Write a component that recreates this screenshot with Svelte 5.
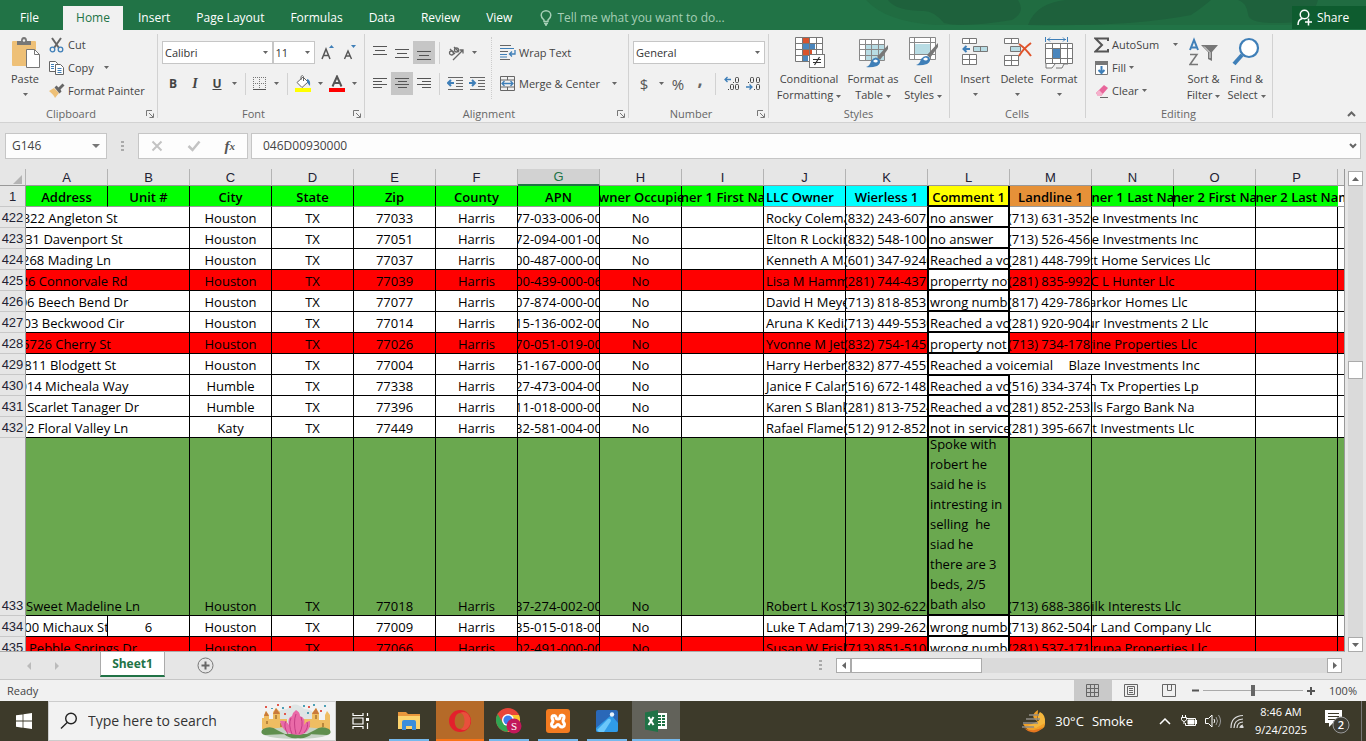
<script>
  const tabs = ['Insert', 'Page Layout', 'Formulas', 'Data', 'Review', 'View'];
  const letters = 'ABCDEFGHIJKLMNOP'.split('');
  const heads = [
    ['Address', 'lime'], ['Unit #', 'lime'], ['City', 'lime'], ['State', 'lime'], ['Zip', 'lime'],
    ['County', 'lime'], ['APN', 'lime'], ['Owner Occupied', 'lime'], ['Owner 1 First Name', 'lime'],
    ['LLC Owner', 'cyan left'], ['Wierless 1', 'cyan'], ['Comment 1', 'yellow'], ['Landline 1', 'orange'],
    ['Owner 1 Last Name', 'lime'], ['Owner 2 First Name', 'lime'], ['Owner 2 Last Name', 'lime spill']
  ];
  const rows = [
    { n: 422, a: '5322 Angleton St', c: 'Houston', z: '77033', g: '077-033-006-000', j: 'Rocky Coleman', k: '(832) 243-6073', l: 'no answer', m: '(713) 631-3529', o: 'Blaze Investments Inc' },
    { n: 423, a: '4031 Davenport St', c: 'Houston', z: '77051', g: '072-094-001-000', j: 'Elton R Lockin', k: '(832) 548-1000', l: 'no answer', m: '(713) 526-4562', o: 'Blaze Investments Inc' },
    { n: 424, a: '268 Mading Ln', c: 'Houston', z: '77037', g: '000-487-000-000', j: 'Kenneth A May', k: '(601) 347-9240', l: 'Reached a voicemail', m: '(281) 448-7999', o: 'Perfect Home Services Llc' },
    { n: 425, a: '1426 Connorvale Rd', c: 'Houston', z: '77039', g: '100-439-000-060', j: 'Lisa M Hammer', k: '(281) 744-4373', l: 'properrty not', m: '(281) 835-9922', o: 'C L Hunter Llc', t: 'red' },
    { n: 426, a: '1206 Beech Bend Dr', c: 'Houston', z: '77077', g: '107-874-000-000', j: 'David H Meyer', k: '(713) 818-8531', l: 'wrong number', m: '(817) 429-7865', o: 'Markor Homes Llc' },
    { n: 427, a: '1403 Beckwood Cir', c: 'Houston', z: '77014', g: '115-136-002-000', j: 'Aruna K Kedia', k: '(713) 449-5530', l: 'Reached a voicemail', m: '(281) 920-9043', o: 'Labour Investments 2 Llc' },
    { n: 428, a: '5726 Cherry St', c: 'Houston', z: '77026', g: '070-051-019-000', j: 'Yvonne M Jeter', k: '(832) 754-1450', l: 'property not', m: '(713) 734-1782', o: 'Marine Properties Llc', t: 'red' },
    { n: 429, a: '2811 Blodgett St', c: 'Houston', z: '77004', g: '061-167-000-000', j: 'Harry Herbert', k: '(832) 877-4557', l: 'Reached a voicemial', m: '', o: 'Blaze Investments Inc', wide: true },
    { n: 430, a: '11014 Micheala Way', c: 'Humble', z: '77338', g: '127-473-004-000', j: 'Janice F Calan', k: '(516) 672-1482', l: 'Reached a voicemail', m: '(516) 334-3747', o: 'Then Tx Properties Lp' },
    { n: 431, a: '1414 Scarlet Tanager Dr', c: 'Humble', z: '77396', g: '111-018-000-000', j: 'Karen S Blank', k: '(281) 813-7524', l: 'Reached a voicemail', m: '(281) 852-2532', o: 'Wells Fargo Bank Na' },
    { n: 432, a: '2202 Floral Valley Ln', c: 'Katy', z: '77449', g: '132-581-004-000', j: 'Rafael Flamer', k: '(512) 912-8528', l: 'not in service', m: '(281) 395-6678', o: 'First Investments Llc' },
    { n: 433, a: '1038 Sweet Madeline Ln', c: 'Houston', z: '77018', g: '137-274-002-000', j: 'Robert L Koss', k: '(713) 302-6220', l: 'Spoke with robert he said he is intresting in selling\u00a0 he siad he there are 3 beds, 2/5 bath also', m: '(713) 688-3860', o: 'Silk Interests Llc', t: 'green' },
    { n: 434, a: '00 Michaux St', b: '6', c: 'Houston', z: '77009', g: '035-015-018-000', j: 'Luke T Adams', k: '(713) 299-2620', l: 'wrong number', m: '(713) 862-5045', o: 'Harbor Land Company Llc' },
    { n: 435, a: '1010 Pebble Springs Dr', c: 'Houston', z: '77066', g: '102-491-000-000', j: 'Susan W Frish', k: '(713) 851-5100', l: 'wrong number', m: '(281) 537-1716', o: 'Construpa Properties Llc', t: 'red' }
  ];
  let formula = $state('046D00930000');
  let cellName = $state('G146');
  let zoom = $state(50);
</script>

{#snippet arrow()}<svg class="arr" width="5" height="3" viewBox="0 0 5 3"><path d="M0 0h5L2.500 3z" fill="#666" /></svg>{/snippet}
{#snippet launch()}<button class="launch" aria-label="More settings"><svg width="8" height="8" viewBox="0 0 8 8"><path d="M.5 6V.5H6M3 3l4 4M7.500 3.500v4h-4" fill="none" stroke="#777" /></svg></button>{/snippet}
{#snippet lines(xs)}<svg width="14" height="14" viewBox="0 0 14 14">{#each xs as [x, y, w]}<rect {x} {y} width={w} height="1" fill="#555" />{/each}</svg>{/snippet}

<div class="app">
  <header class="top">
    <svg class="art" width="500" height="30" viewBox="0 0 500 30" aria-hidden="true">
      <path d="M0 0h500v25H70Q20 22 0 0z" fill="#206c41" />
      <path d="M22 0h130q8 12-6 20-50 8-68 3-10-12-20-12-28 0-36-11zM162 25Q170 3 200 0h145q-12 10-20 15-60 12-163 10zM372 0h80q-5 18-20 22-50 4-50-8-2-12-10-14z" fill="#1e613c" />
    </svg>
    <button class="file">File</button>
    <button class="tab on">Home</button>
    {#each tabs as t}<button class="tab">{t}</button>{/each}
    <button class="tell">
      <svg width="12" height="16" viewBox="0 0 12 16" fill="none" stroke="#a6cfb6" stroke-width="1.500"><path d="M4 11.500V10C2.500 8.500 1.200 7.500 1.200 5.300a4.800 4.500 0 0 1 9.600 0C10.800 7.500 9.500 8.500 8 10v1.500zM4 13.500h4M5 15h2" /></svg>
      Tell me what you want to do...
    </button>
    <button class="share">
      <svg width="16" height="17" viewBox="0 0 16 17" fill="none" stroke="#fff" stroke-width="1.500"><circle cx="7.500" cy="5.500" r="4.300" /><path d="M1 16c0-4 2-6 4.500-6.500M8 13h7M11.500 9.500v7" /></svg>
      Share
    </button>
  </header>

  <div class="ribbon">
    <section class="group clip">
      <div class="body">
        <button class="big paste">
          <svg width="30" height="32" viewBox="0 0 30 32"><rect x="2" y="4" width="24" height="25" rx="1" fill="#eec077" /><path d="M7 8V4h4q0-4 3-4t3 4h4v4z" fill="#777" /><circle cx="14" cy="3.500" r="1.200" fill="#f1f1f1" /><path d="M16.500 12.500h8l5 5v13h-13z" fill="#fff" stroke="#777" /><path d="M24.500 12.500v5h5" fill="none" stroke="#777" /></svg>
          <span>Paste</span>{@render arrow()}
        </button>
        <div class="stack">
          <button><svg width="16" height="16" viewBox="0 0 16 16"><path d="M3 1l7 10M12 1L5 11" stroke="#666" stroke-width="2" /><g fill="none" stroke="#3f7fb8" stroke-width="1.300"><circle cx="3.500" cy="12.500" r="2.300" /><circle cx="11.500" cy="12.500" r="2.300" /></g></svg>Cut</button>
          <button><svg width="16" height="16" viewBox="0 0 16 16" fill="#fff" stroke="#666"><path d="M.5 1.500h6l2 2v8h-8z" /><path d="M6.500 4.500h5l3 3v7h-8z" /><path d="M2 4.500h3M2 6.500h3M2 8.500h3M8.500 8.500h4M8.500 10.500h4M8.500 12.500h4" stroke="#3f7fb8" /></svg>Copy<i class="sp"></i>{@render arrow()}</button>
          <button><svg width="16" height="16" viewBox="0 0 16 16"><path d="M0 8l5-3 5 5-4 5q-1-3-6-7z" fill="#eec077" /><path d="M5.500 4.500l2-2 2 2 4-4 2 2-4 4 1 2-2 2z" fill="#666" /></svg>Format Painter</button>
        </div>
      </div>
      <footer>Clipboard</footer>{@render launch()}
    </section>

    <section class="group font">
      <div class="row">
        <label class="sel w-face"><select aria-label="Font"><option>Calibri</option></select>{@render arrow()}</label>
        <label class="sel w-size"><select aria-label="Font size"><option>11</option></select>{@render arrow()}</label>
        <button class="c22 l4" aria-label="Increase font size"><svg width="14" height="15" viewBox="0 0 14 15"><path d="M1 14L5 4l4 10M2.500 10.500h5" fill="none" stroke="#555" stroke-width="1.500" /><path d="M8 3h5l-2.500-3z" fill="#3f7fb8" /></svg></button>
        <button class="c22" aria-label="Decrease font size"><svg width="14" height="15" viewBox="0 0 14 15"><path d="M1.500 14L5 6l3.500 8M3 11h4" fill="none" stroke="#555" stroke-width="1.400" /><path d="M8 0h5l-2.500 3z" fill="#3f7fb8" /></svg></button>
      </div>
      <div class="row">
        <button class="c22"><b>B</b></button>
        <button class="c22"><b class="it">I</b></button>
        <button class="c22"><b class="un">U</b></button>
        <button class="c12" aria-label="Underline styles">{@render arrow()}</button><i class="bar"></i>
        <button class="c22" aria-label="Borders"><svg width="13" height="13" viewBox="0 0 13 13"><path d="M.5 0v12M6.500 0v12M12.500 0v12M0 .5h13M0 6.500h13" stroke="#777" stroke-dasharray="1 1" /><path d="M0 12.500h13" stroke="#555" /></svg></button>
        <button class="c12" aria-label="Border styles">{@render arrow()}</button><i class="bar"></i>
        <button class="c22 l4" aria-label="Fill color"><svg width="17" height="17" viewBox="0 0 17 17"><path d="M2 7.500L8 2l5 5-6 5.500zM6 5V1.500q1.500-2 2.500 0V6" fill="#fff" stroke="#666" /><path d="M12 4q4 1 3 7-2-2-3-4z" fill="#3f7fb8" /><rect y="13" width="16" height="4" fill="#ff0" /></svg></button>
        <button class="c12" aria-label="Fill colors">{@render arrow()}</button>
        <button class="c22" aria-label="Font color"><svg width="16" height="17" viewBox="0 0 16 17"><path d="M3.500 11.500L8 1.500l4.500 10M5 8h6" fill="none" stroke="#555" stroke-width="2" /><rect y="13" width="16" height="4" fill="red" /></svg></button>
        <button class="c12" aria-label="Font colors">{@render arrow()}</button>
      </div>
      <footer>Font</footer>{@render launch()}
    </section>

    <section class="group align">
      <div class="two">
        <div class="left-part">
          <div class="row">
            <button class="c22" aria-label="Top align">{@render lines([[0, 0, 14], [2, 4, 10], [0, 8, 14]])}</button>
            <button class="c22" aria-label="Middle align">{@render lines([[0, 3, 14], [2, 7, 10], [0, 11, 14]])}</button>
            <button class="c22 sel-on" aria-label="Bottom align">{@render lines([[0, 5, 14], [2, 9, 10], [0, 13, 14]])}</button><i class="bar"></i>
            <button class="c24" aria-label="Orientation"><svg width="17" height="16" viewBox="0 0 17 16" fill="none" stroke="#666" stroke-width="1.300"><circle cx="3.500" cy="8" r="2" /><path d="M2 4l5 5M6 2l5 5" /><circle cx="8.500" cy="5" r="2" /><path d="M5 15L15 5M11.500 5H15v3.500" /></svg></button>
            <button class="c12" aria-label="Orientation options">{@render arrow()}</button>
          </div>
          <div class="row">
            <button class="c22" aria-label="Align left">{@render lines([[0, 1, 14], [0, 4, 9], [0, 7, 14], [0, 10, 9]])}</button>
            <button class="c22 sel-on" aria-label="Center">{@render lines([[0, 1, 14], [3, 4, 9], [0, 7, 14], [3, 10, 9]])}</button>
            <button class="c22" aria-label="Align right">{@render lines([[0, 1, 14], [5, 4, 9], [0, 7, 14], [5, 10, 9]])}</button><i class="bar"></i>
            <button class="c22" aria-label="Decrease indent"><svg width="16" height="13" viewBox="0 0 16 13"><path d="M1 .5h15M9 3.500h7M9 6.500h7M9 9.500h7M1 12.500h15" stroke="#666" /><path d="M7 6H2M4 3L1 6l3 3" fill="none" stroke="#3f7fb8" stroke-width="2" /></svg></button>
            <button class="c22" aria-label="Increase indent"><svg width="16" height="13" viewBox="0 0 16 13"><path d="M1 .5h15M9 3.500h7M9 6.500h7M9 9.500h7M1 12.500h15" stroke="#666" /><path d="M0 6h5M3 3l3 3-3 3" fill="none" stroke="#3f7fb8" stroke-width="2" /></svg></button>
          </div>
        </div>
        <div class="right-part">
          <button class="row"><svg width="16" height="15" viewBox="0 0 16 15"><path d="M0 .5h11M0 6.500h8M0 14.500h10" stroke="#666" /><path d="M0 3.500h14M0 9.500h7M0 12h7" stroke="#3f7fb8" /><path d="M15 5v4h-5M12 6.500L9.500 9l2.500 2.500" fill="none" stroke="#3f7fb8" stroke-width="1.300" /></svg>Wrap Text</button>
          <button class="row"><svg width="16" height="15" viewBox="0 0 16 15"><path d="M.5.5h14v14H.5zM0 4h15M0 11h15M7.500 1v3M7.500 11v3" fill="none" stroke="#666" /><path d="M2 7.500h11M4.500 5L2 7.500 4.500 10M10.500 5L13 7.500 10.500 10" fill="none" stroke="#3f7fb8" stroke-width="1.300" /></svg>Merge &amp; Center<i class="sp"></i>{@render arrow()}</button>
        </div>
      </div>
      <footer>Alignment</footer>{@render launch()}
    </section>

    <section class="group number">
      <div class="row"><label class="sel w-gen"><select aria-label="Number format"><option>General</option></select>{@render arrow()}</label></div>
      <div class="row">
        <button class="c22 sym">$</button><button class="c12" aria-label="Currencies">{@render arrow()}</button>
        <button class="c22 sym">%</button><button class="c22 comma">,</button><i class="bar"></i>
        <button class="c22 dec" aria-label="Increase decimal"><svg width="15" height="15" viewBox="0 0 15 15"><path d="M7 3.500H1M3.500 1L1 3.500 3.500 6" fill="none" stroke="#3f7fb8" stroke-width="1.300" /><g fill="none" stroke="#444"><rect x="11.500" y="1.500" width="3" height="5" rx="1" /><rect x="6.500" y="8.500" width="3" height="5" rx="1" /><rect x="11.500" y="8.500" width="3" height="5" rx="1" /></g><path d="M9 6h1v1H9zM4 13h1v1H4z" fill="#444" /></svg></button>
        <button class="c22 dec" aria-label="Decrease decimal"><svg width="15" height="15" viewBox="0 0 15 15"><path d="M0 11h6M3.500 8.500L6 11l-2.500 2.500" fill="none" stroke="#3f7fb8" stroke-width="1.300" /><g fill="none" stroke="#444"><rect x="4.500" y="1.500" width="3" height="5" rx="1" /><rect x="10.500" y="1.500" width="3" height="5" rx="1" /><rect x="10.500" y="8.500" width="3" height="5" rx="1" /></g><path d="M2 6h1v1H2zM8 13h1v1H8z" fill="#444" /></svg></button>
      </div>
      <footer>Number</footer>{@render launch()}
    </section>

    <section class="group styles">
      <div class="body">
        <button class="big w-cond">
          <svg width="32" height="32" viewBox="0 0 32 32"><path d="M2.500.5h27v24h-27z" fill="#fff" /><path d="M10 1h7v6h-7zM10 13h9v6h-9z" fill="#d9532c" /><path d="M10 7h12v5H10zM10 19h5v5h-5z" fill="#4a86bd" /><path d="M2.500.5h27v24h-27zM2.500 6.500h27M2.500 12.500h27M2.500 18.500h27M9.500.5v24M16.500.5v24M23.500.5v24" fill="none" stroke="#777" /><rect x="16.500" y="17.500" width="15" height="13" fill="#fff" stroke="#777" /><path d="M20 22.500h8M20 25.500h8M26.500 20l-5 8" stroke="#333" stroke-width="1.200" /></svg>
          <span>Conditional</span><span>Formatting {@render arrow()}</span>
        </button>
        <button class="big w-fmt">
          <svg width="32" height="32" viewBox="0 0 32 32"><path d="M2.500 2.500h25v21h-25z" fill="#fff" /><path d="M9 8h18v15H9z" fill="#b8dce4" /><path d="M2.500 2.500h25v21h-25zM2.500 7.500h25M2.500 12.500h25M2.500 18.500h25M8.500 2.500v21M14.500 2.500v21M21.500 2.500v21" fill="none" stroke="#888" /><path d="M31 8l-11 12 3 3 8-11z" fill="#777" /><path d="M9 30q4-1 5-6 4-6 8-2 3 4-2 7-6 2-11 1z" fill="#3f7fb8" /><path d="M16 24q3-3 5 0-2 3-5 0" fill="#fff" /></svg>
          <span>Format as</span><span>Table {@render arrow()}</span>
        </button>
        <button class="big w-cell">
          <svg width="32" height="32" viewBox="0 0 32 32"><path d="M2.500.5h26v22h-26z" fill="#fff" /><path d="M8 7h15v10H8z" fill="#b8dce4" /><path d="M2.500.5h26v22h-26zM2.500 5.500h26M2.500 17.500h26M7.500.5v22M23.500.5v22" fill="none" stroke="#888" /><path d="M31 6l-11 12 3 3 8-11z" fill="#777" /><path d="M9 28q4-1 5-6 4-5 8-2 3 4-2 7-6 2-11 1z" fill="#3f7fb8" /><path d="M16 22q3-3 5 0-2 3-5 0" fill="#fff" /></svg>
          <span>Cell</span><span>Styles {@render arrow()}</span>
        </button>
      </div>
      <footer>Styles</footer>
    </section>

    <section class="group cells">
      <div class="body">
        <button class="big w-ins">
          <svg width="30" height="32" viewBox="0 0 30 32" fill="#fff" stroke="#777"><path d="M2.500 1.500h14v5h-14zM9.500 1.500v5M2.500 17.500h14v10h-14zM2.500 22.500h14M9.500 17.500v10" /><path d="M13.500 9.500h14v5h-14zM20.500 9.500v5" fill="#b8dce4" /><path d="M10 12H4M6.500 9L3.500 12l3 3" fill="none" stroke="#3f7fb8" stroke-width="2" /></svg>
          <span>Insert</span>{@render arrow()}
        </button>
        <button class="big w-ins">
          <svg width="30" height="32" viewBox="0 0 30 32" fill="#fff" stroke="#777"><path d="M2.500 1.500h14v5h-14zM9.500 1.500v5M2.500 18.500h14v10h-14zM2.500 23.500h14M9.500 18.500v10" /><path d="M8.500 9.500h10v5h-10z" fill="#b8dce4" /><path d="M17 7q6 4 12 12M29 6Q21 12 17 19" fill="none" stroke="#e0532a" stroke-width="2" /></svg>
          <span>Delete</span>{@render arrow()}
        </button>
        <button class="big w-ins">
          <svg width="30" height="32" viewBox="0 0 30 32" fill="#fff" stroke="#777"><path d="M1.500 6.500h27v20h-27zM1.500 11.500h27M1.500 21.500h27M8.500 6.500v20M16.500 6.500v20M23.500 6.500v20M2 27v4h6l3-4M12 31h6l2-4h4" /><path d="M9 12h7v9H9z" fill="#4a86bd" stroke="none" /><path d="M1.500 0v5M23.500 0v5M3 2.500h19M6 .5L4 2.500l2 2M19 .5l2 2-2 2" fill="none" stroke="#3f7fb8" /></svg>
          <span>Format</span>{@render arrow()}
        </button>
      </div>
      <footer>Cells</footer>
    </section>

    <section class="group edit">
      <div class="body">
        <div class="stack">
          <button><svg width="15" height="16" viewBox="0 0 15 16"><path d="M14 4V1.500H1.500L8 8l-6.500 6.500H14V12" fill="none" stroke="#555" stroke-width="2" /></svg>AutoSum<i class="sp"></i>{@render arrow()}</button>
          <button><svg width="15" height="16" viewBox="0 0 15 16"><path d="M1.500 1.500h12v13h-12z" fill="#fff" stroke="#777" /><path d="M1 1h13v4H1z" fill="#777" /><path d="M7.500 6v7M4.500 10l3 3 3-3" fill="none" stroke="#3f7fb8" stroke-width="2" /></svg>Fill {@render arrow()}</button>
          <button><svg width="15" height="16" viewBox="0 0 15 16"><path d="M2 10l8-8 4 3-7 8H4z" fill="#e8659b" /><path d="M2 10l3-3 4 4-2 2H4z" fill="#f5b2cc" /><path d="M6 14.500h8" stroke="#666" /></svg>Clear {@render arrow()}</button>
        </div>
        <button class="big w-find">
          <svg width="30" height="32" viewBox="0 0 30 32"><path d="M1 13L5 3l4 10M2.500 10.500h5" fill="none" stroke="#3f7fb8" stroke-width="2" /><path d="M1 17.500h7L1 27.500h8" fill="none" stroke="#777" stroke-width="1.500" /><path d="M12 8h17l-6 7v9l-4-2v-7z" fill="#777" /><path d="M15 9.500l6 6V21" stroke="#eee" fill="none" /></svg>
          <span>Sort &amp;</span><span>Filter {@render arrow()}</span>
        </button>
        <button class="big w-find">
          <svg width="30" height="32" viewBox="0 0 30 32"><circle cx="17" cy="11" r="9" fill="#fff" stroke="#3f7fb8" stroke-width="2.200" /><path d="M10 18l-8 9" stroke="#3f7fb8" stroke-width="4" /></svg>
          <span>Find &amp;</span><span>Select {@render arrow()}</span>
        </button>
      </div>
      <footer>Editing</footer>
    </section>
    <button class="collapse" aria-label="Collapse the ribbon"><svg width="9" height="6" viewBox="0 0 9 6"><path d="M1 5l3.500-3.500L8 5" fill="none" stroke="#666" stroke-width="2" /></svg></button>
  </div>

  <div class="fbar">
    <label class="name"><input aria-label="Name box" bind:value={cellName} /><svg width="8" height="4" viewBox="0 0 8 4"><path d="M0 0h8L4 4z" fill="#777" /></svg></label>
    <span class="dots"></span>
    <div class="fx">
      <button aria-label="Cancel"><svg width="12" height="12" viewBox="0 0 12 12"><path d="M1.500 1.500l9 9M10.500 1.500l-9 9" stroke="#c3c3c3" stroke-width="2" /></svg></button>
      <button aria-label="Enter"><svg width="14" height="12" viewBox="0 0 14 12"><path d="M1.500 6l4 4 7-8.500" fill="none" stroke="#c3c3c3" stroke-width="2.500" /></svg></button>
      <button class="fn" aria-label="Insert function">f<small>x</small></button>
    </div>
    <label class="formula"><input aria-label="Formula bar" bind:value={formula} /><svg width="8" height="6" viewBox="0 0 8 6"><path d="M1 1l3 3 3-3" fill="none" stroke="#666" stroke-width="2" /></svg></label>
  </div>

  <main class="sheet">
    <div class="grid">
      <table>
        <colgroup><col class="ch" />{#each letters as l}<col class="cc" />{/each}<col /></colgroup>
        <thead>
          <tr class="letters"><th class="corner"><svg width="9" height="9" viewBox="0 0 9 9"><path d="M9 0v9H0z" fill="#b4b4b4" /></svg></th>{#each letters as l}<th class:cur={l === 'G'}>{l}</th>{/each}<th></th></tr>
          <tr class="heads"><th class="rh">1</th>{#each heads as [h, c]}<th class={c}><div class="cell"><span>{h}</span></div></th>{/each}<th class="edge"></th></tr>
        </thead>
        <tbody>
          {#each rows as r}
            <tr class={r.t ?? ''}>
              <th class="rh">{r.n}</th>
              {#if r.b}
                <td><div class="cell"><span>{r.a}</span></div></td><td><div class="cell"><span>{r.b}</span></div></td>
              {:else}
                <td colspan="2"><div class="cell"><span>{r.a}</span></div></td>
              {/if}
              {#each [r.c, 'TX', r.z, 'Harris', r.g, 'No', ''] as v}<td><div class="cell"><span>{v}</span></div></td>{/each}
              <td class="left"><div class="cell"><span>{r.j}</span></div></td>
              <td class="phone"><div class="cell"><span>{r.k}</span></div></td>
              {#if r.wide}
                <td colspan="4" class="cm wide"><div class="join"><div class="cell"><span>{r.l}</span></div><div class="cell"></div><div class="cell mid"><span>{r.o}</span></div></div></td>
              {:else}
                <td class="cm" class:first={r.n === 430}><div class="cell"><span>{r.l}</span></div></td>
                <td class="phone"><div class="cell"><span>{r.m}</span></div></td>
                <td colspan="2"><div class="cell"><span>{r.o}</span></div></td>
              {/if}
              <td></td><td class="edge"></td>
            </tr>
          {/each}
        </tbody>
      </table>
    </div>
    <div class="vscroll">
      <button aria-label="Scroll up"><svg width="7" height="4" viewBox="0 0 7 4"><path d="M0 4h7L3.500 0z" fill="#666" /></svg></button>
      <div class="track"><span class="thumb"></span></div>
      <button aria-label="Scroll down"><svg width="7" height="4" viewBox="0 0 7 4"><path d="M0 0h7L3.500 4z" fill="#666" /></svg></button>
    </div>
  </main>

  <nav class="tabsbar">
    <button class="nv" aria-label="Previous sheet"><svg width="4" height="8" viewBox="0 0 4 8"><path d="M4 0v8L0 4z" fill="#bbb" /></svg></button>
    <button class="nv" aria-label="Next sheet"><svg width="4" height="8" viewBox="0 0 4 8"><path d="M0 0v8l4-4z" fill="#bbb" /></svg></button>
    <button class="st">Sheet1</button>
    <button class="add" aria-label="New sheet"><svg width="17" height="17" viewBox="0 0 17 17"><circle cx="8.500" cy="8.500" r="7.500" fill="none" stroke="#777" /><path d="M8.500 4.500v8M4.500 8.500h8" stroke="#666" stroke-width="2" /></svg></button>
    <span class="dots push"></span>
    <div class="hscroll">
      <button aria-label="Scroll left"><svg width="4" height="7" viewBox="0 0 4 7"><path d="M4 0v7L0 3.500z" fill="#666" /></svg></button>
      <span class="hthumb"></span><span class="htrack"></span>
      <button aria-label="Scroll right"><svg width="4" height="7" viewBox="0 0 4 7"><path d="M0 0v7l4-3.500z" fill="#666" /></svg></button>
    </div>
  </nav>

  <div class="status">
    <span class="ready">Ready</span>
    <button class="vw on" aria-label="Normal view"><svg width="14" height="13" viewBox="0 0 14 13"><path d="M.5.5h12v12H.5zM4.500.5v12M8.500.5v12M.5 4.500h12M.5 8.500h12" fill="none" stroke="#666" /></svg></button>
    <button class="vw" aria-label="Page layout view"><svg width="14" height="13" viewBox="0 0 14 13"><path d="M.5.5h13v12H.5zM3.500 2.500h7v8h-7zM5 4.500h4M5 6.500h4M5 8.500h4" fill="none" stroke="#666" /></svg></button>
    <button class="vw" aria-label="Page break view"><svg width="14" height="13" viewBox="0 0 14 13"><path d="M.5.5h13v12H.5zM5.500.5v6h4v-6" fill="none" stroke="#666" /></svg></button>
    <div class="zoom">
      <button aria-label="Zoom out"><svg width="7" height="7" viewBox="0 0 7 7"><path d="M0 3.500h7" stroke="#555" stroke-width="2" /></svg></button>
      <input type="range" aria-label="Zoom" bind:value={zoom} />
      <button aria-label="Zoom in"><svg width="8" height="8" viewBox="0 0 8 8"><path d="M0 4h8M4 0v8" stroke="#555" stroke-width="2" /></svg></button>
    </div>
    <span class="pct">100%</span>
  </div>

  <div class="taskbar">
    <button class="start" aria-label="Start"><svg width="16" height="16" viewBox="0 0 16 16"><path d="M0 2.300L6.600 1.400v6.200H0zM7.400 1.300L16 0v7.600H7.400zM0 8.400h6.600v6.300L0 13.800zM7.400 8.400H16V16l-8.600-1.200z" fill="#fff" /></svg></button>
    <label class="search">
      <svg width="18" height="18" viewBox="0 0 18 18" fill="none" stroke="#222" stroke-width="1.400"><circle cx="11" cy="6.500" r="5.300" /><path d="M7.200 10.500L1 16.500" /></svg>
      <input placeholder="Type here to search" aria-label="Search" />
      <svg width="72" height="38" viewBox="0 0 72 38">
        <path d="M14 26Q12 7 27 7q8-9 17 0 14 0 12 18z" fill="#dfe5e5" />
        <path d="M2 27V16h2v-3l2-4 3 4v4h4V10l3-4 4 4v7h7v11zM44 28V17h8v-6l4-5 3 5v7h6v-5l2-4 3 4v15z" fill="#efbd62" />
        <path d="M13 12l3-6 4 6zM52 12l4-6 3 6zM4 14l2-5 3 5z" fill="#c9793b" />
        <path d="M15 13h2v4h-2zM55 13h2v4h-2zM6 19h2v3H6zM20 21h2v4h-2zM48 21h2v4h-2zM62 21h2v4h-2z" fill="#b9863c" />
        <ellipse cx="36" cy="31" rx="34" ry="6" fill="#c4d2c4" />
        <path d="M3 27q8-4 14 1l8 4-20 1q-6-2-2-6zM69 27q-8-4-14 1l-8 4 20 1q6-2 2-6zM24 32h28q-6 5-14 4-9 1-14-4z" fill="#5f8f4e" />
        <path d="M20 19q6-1 9 4-2-7 3-9 1-4 4-6 4 2 4 6 6 2 4 9 3-4 6-4 1 11-10 14-17 0-20-14z" fill="#ea6aa8" />
        <path d="M28 32q-5-8-2-13M32 32q-4-9-1-16M36 32q-3-12 0-20M39 32q5-8 2-17M44 31q5-6 3-11" fill="none" stroke="#c53f85" />
        <g fill="#e2574c"><path d="M5 4h2v2H5zM17 2h2v2h-2zM29 4h2v2h-2zM48 4h2v2h-2zM60 8h2v2h-2zM24 11h2v2h-2z" /></g>
        <g fill="#4d9fb5"><path d="M11 6h2v1h-2zM22 5h2v2h-2zM43 3h2v2h-2zM64 3h2v2h-2zM53 2h2v2h-2zM47 10h2v2h-2z" /></g>
      </svg>
    </label>
    <button class="task" aria-label="Task view"><svg width="17" height="16" viewBox="0 0 17 16" fill="none" stroke="#fff" stroke-width="1.200"><path d="M1 0v2.500h10V0M1 16v-2.500h10V16M1 5h10v6H1zM15.500 0v3M15.500 10v6" /><path d="M14 5h3v3h-3z" fill="#fff" stroke="none" /></svg></button>
    <button class="task run" aria-label="File Explorer"><svg width="22" height="18" viewBox="0 0 22 18"><path d="M0 0h8l2 2h12v15H0z" fill="#e8963c" /><path d="M0 4h22v13H0z" fill="#fcd36d" /><path d="M4 18v-8q0-2 2-2h10q2 0 2 2v8h-4v-4H8v4z" fill="#3b8edb" /></svg></button>
    <button class="task opera" aria-label="Opera"><svg width="24" height="24" viewBox="0 0 24 24"><path fill-rule="evenodd" d="M12 1a11 11 0 1 1 0 22 11 11 0 0 1 0-22zm0 3c-7 0-7 16 0 16s7-16 0-16z" fill="#e3202c" /><path fill-rule="evenodd" d="M12 4c3-2 6-1 8 1q5 7 0 14c-2 2-5 3-8 1 6 0 6-16 0-16z" fill="#e8503c" /></svg></button>
    <button class="task run" aria-label="Chrome"><svg width="26" height="26" viewBox="0 0 26 26"><circle cx="12" cy="12" r="12" fill="#e9453a" /><path d="M1.600 6A12 12 0 0 0 11 24l6-9H7z" fill="#31a552" /><path d="M23 7H12l5 8-5 9a12 12 0 0 0 11-17z" fill="#fbc62f" /><circle cx="12" cy="12" r="6" fill="#fff" /><circle cx="12" cy="12" r="4.600" fill="#3b7ded" /><circle cx="18" cy="18" r="7.500" fill="#c2185b" /><text x="18" y="22" text-anchor="middle" font-family="Liberation Serif" font-size="11" fill="#fff">S</text></svg></button>
    <button class="task run" aria-label="XAMPP"><svg width="24" height="24" viewBox="0 0 24 24"><rect width="24" height="24" rx="3" fill="#f47b20" /><path d="M8 6.500a2 2 0 0 0-2 2c0 1.500 1 2 1 3.500s-1.500 2-1.500 3.500a2.500 2.500 0 0 0 4.500 1.500q2-3 4 0a2.500 2.500 0 0 0 4.500-1.500c0-1.500-1.500-2-1.500-3.500s1-2 1-3.500a2 2 0 0 0-4-.5q0 2-2 2t-2-2a2 2 0 0 0-2-1.500z" fill="none" stroke="#fff" stroke-width="3" /></svg></button>
    <button class="task run" aria-label="Photos"><svg width="22" height="22" viewBox="0 0 22 22"><rect width="22" height="22" rx="2" fill="#2a68b8" /><path d="M0 18L13 7q2-2 4 0l5 6v7q0 2-2 2H2q-2 0-2-2z" fill="#2f9be8" /><path d="M1 20L12 9q3-1 3 2L8 22H3z" fill="#6bc7fa" /><circle cx="16" cy="4.500" r="2.200" fill="#e9f4fd" /></svg></button>
    <button class="task excel" aria-label="Excel"><svg width="22" height="22" viewBox="0 0 22 22"><path d="M11 3h11v16H11z" fill="#fff" /><path d="M13 5h3v2h-3zM17 5h3v2h-3zM13 8h3v2h-3zM17 8h3v2h-3zM13 11h3v2h-3zM17 11h3v2h-3zM13 14h3v2h-3zM17 14h3v2h-3z" fill="#1f7246" /><path d="M0 2.500L13 0v22L0 19.500z" fill="#1f7246" /><path d="M3.500 7l5 8M8.500 7l-5 8" stroke="#fff" stroke-width="2" /></svg></button>
    <div class="tray">
      <button class="weather"><svg width="26" height="24" viewBox="0 0 26 24"><path d="M17 1q-9 6-1 11l7-1q3 6-2 9-10 5-16-1l-3-4h14z" fill="#f0a028" /><path d="M19 3q6 3 5 11l-9 5q-5-2-9-2l12-5q-3-5 1-9z" fill="#f4b63c" /><path d="M3 19q10 5 19-1-5 7-12 5-4-1-7-4z" fill="#e5761f" /><path d="M8 6h10M5 10h14M2 14h15M1 18h12" stroke="#8e8c86" stroke-width="1.500" /></svg><span>30°C</span><span>Smoke</span></button>
      <button class="ti" aria-label="Hidden icons"><svg width="12" height="7" viewBox="0 0 12 7"><path d="M1 6l5-5 5 5" fill="none" stroke="#fff" stroke-width="1.500" /></svg></button>
      <button class="ti" aria-label="Battery"><svg width="16" height="12" viewBox="0 0 16 12" fill="none" stroke="#fff"><path d="M5.500 3.500h9v7H4.500V8M15.500 5v4" /><path d="M7 5h6v4H7z" fill="#fff" /><path d="M1.500 0v2M4.500 0v2M.5 2.500h5v2q-1 2-2.500 2T.5 4.500zM3 6.500V9" /></svg></button>
      <button class="ti" aria-label="Volume"><svg width="17" height="14" viewBox="0 0 17 14" fill="none" stroke="#fff"><path d="M.5 4.500h3L7 1v12L3.500 9.500h-3zM9 5q1.500 2 0 4" /><path d="M11 3q3 4 0 8M13.500 1q4 6 0 12" stroke="#999" /></svg></button>
      <button class="ti" aria-label="Network"><svg width="14" height="14" viewBox="0 0 14 14" fill="none" stroke="#ddd" stroke-width="1.200"><path d="M1 14Q1 2 13 1.500M4 14Q4 5.500 13 5M7 14q0-5.500 6-6M10 14q0-2.500 3-3" /><circle cx="12" cy="13" r="1" fill="#fff" /></svg></button>
      <div class="clock"><span>8:46 AM</span><span>9/24/2025</span></div>
      <button class="note" aria-label="Notifications"><svg width="26" height="26" viewBox="0 0 26 26"><path d="M1 2h17v13H9l-4 4v-4H1z" fill="#fff" /><path d="M4 5.500h11M4 8.500h11M4 11.500h7" stroke="#3d3a2a" /><circle cx="17" cy="17" r="8" fill="#3f3e35" stroke="#999" /><text x="17" y="21" text-anchor="middle" font-family="Open Sans" font-weight="600" font-size="11" fill="#fff">2</text></svg></button>
      <i class="desk"></i>
    </div>
  </div>
</div>

<style>
  :global(body) { margin: 0; }
  .app { height: 100vh; display: flex; flex-direction: column; overflow: hidden; font: 11px/16px "Open Sans", sans-serif; color: #444; background: #e6e6e6; }
  button { border: 0; background: none; padding: 0; margin: 0; font: inherit; color: inherit; display: flex; align-items: center; justify-content: center; white-space: nowrap; }
  input { border: 0; background: none; padding: 0; min-width: 0; font: inherit; color: inherit; outline: 0; }
  svg { flex: none; display: block; }
  .top { height: 30px; flex: none; display: flex; align-items: flex-end; background: #217346; color: #fff; font-size: 12px; position: relative; }
  .art { position: absolute; right: 0; top: 0; }
  .top button { position: relative; height: 24px; }
  .top .file { width: 63px; padding-right: 4px; box-sizing: border-box; }
  .tab { padding: 0 13px; }
  .top .tab.on { background: #f1f1f1; color: #217346; width: 60px; padding: 0; margin-right: 2px; }
  .tell { margin-left: 15px; gap: 5px; color: #a6cfb6; }
  .top .share { margin-left: auto; width: 74px; height: 23px; margin-bottom: 1px; gap: 4px; background: #0e5c2f; padding-right: 12px; box-sizing: border-box; }

  .ribbon { height: 92px; flex: none; display: flex; background: #f1f1f1; border-bottom: 1px solid #d2d2d2; position: relative; }
  .group { position: relative; box-sizing: border-box; padding: 7px 4px 0; flex: none; }
  .group::after { content: ''; position: absolute; right: 0; top: 4px; bottom: 4px; width: 1px; background: #d2d2d2; }
  .group footer { position: absolute; left: 0; right: 16px; bottom: 0; text-align: center; color: #666; }
  .launch { position: absolute; right: 4px; bottom: 4px; }
  .clip { width: 158px; } .font { width: 207px; } .align { width: 264px; } .number { width: 140px; }
  .styles { width: 181px; } .cells { width: 136px; } .edit { width: 187px; }
  .styles footer, .cells footer, .edit footer { right: 2px; }
  .body { display: flex; }
  .big { flex-direction: column; justify-content: flex-start; line-height: 16px; }
  .big > svg:first-child { margin-bottom: 2px; }
  .big > .arr { margin-top: 6px; }
  .arr { display: inline-block; vertical-align: middle; }
  .paste { width: 42px; }
  .w-cond { width: 72px; } .w-fmt { width: 56px; } .w-cell { width: 44px; } .w-ins { width: 42px; } .w-find { width: 43px; }
  .stack { display: flex; flex-direction: column; margin-top: -4px; }
  .clip .stack { margin-left: 3px; }
  .edit .stack { width: 84px; margin: -4px 4px 0 4px; }
  .stack button { height: 23px; justify-content: flex-start; gap: 3px; }
  .stack .sp { width: 4px; } .edit .sp { flex: 1; }
  .row { display: flex; align-items: center; height: 31px; }
  .sel { display: flex; align-items: center; height: 23px; box-sizing: border-box; border: 1px solid #c6c6c6; background: #fff; padding: 0 4px 0 2px; }
  .sel select { appearance: none; border: 0; background: none; padding: 0; flex: 1; min-width: 0; font: inherit; color: #333; outline: 0; }
  .w-face { width: 112px; } .w-size { width: 43px; } .w-gen { width: 132px; }
  .c22 { width: 22px; height: 23px; flex: none; } .c12 { width: 12px; height: 23px; flex: none; } .c24 { width: 24px; height: 23px; }
  .l4 { margin-left: 2px; }
  .sel-on { background: #c6c6c6; }
  .font b { font-size: 12px; } .font b.it { font: italic 700 14px "Liberation Serif", serif; } .un { text-decoration: underline; }
  .bar { width: 1px; height: 22px; flex: none; background: #d2d2d2; margin: 0 4px; }
  .sym { font-size: 15px; color: #555; } .comma { font-size: 18px; font-weight: 700; line-height: 10px; padding-bottom: 10px; color: #666; }
  .font .bar { margin: 0 2px 0 5px; }
  .two { display: flex; }
  .left-part { width: 122px; border-right: 1px dotted #ccc; }
  .right-part .row { margin-left: 8px; gap: 3px; } .right-part .sp { width: 6px; }
  .collapse { position: absolute; right: 10px; bottom: 5px; }

  .fbar { height: 46px; flex: none; display: flex; align-items: center; padding: 0 5px; font-size: 12px; }
  .name, .fx, .formula { height: 26px; box-sizing: border-box; border: 1px solid #c6c6c6; background: #fdfdfd; display: flex; align-items: center; }
  .name { width: 102px; padding: 0 6px; } .name input { flex: 1; }
  .dots { width: 3px; height: 11px; margin: 0 14px; background: repeating-linear-gradient(#aaa 0 2px, transparent 2px 4px); }
  .fx { width: 110px; justify-content: space-around; }
  .fn { font: italic 700 15px/15px "Liberation Serif", serif; color: #555; } .fn small { font-size: 11px; }
  .formula { flex: 1; margin-left: 3px; padding: 0 3px 0 11px; } .formula input { flex: 1; }

  .sheet { flex: 1; min-height: 0; display: flex; }
  .grid { flex: 1; min-width: 0; overflow: hidden; border-right: 1px solid #999; border-bottom: 1px solid #aaa; }
  table { table-layout: fixed; width: 100%; border-collapse: separate; border-spacing: 0; font: 13px/20px "Open Sans", sans-serif; color: #000; }
  .ch { width: 26px; } .cc { width: 82px; }
  th, td { padding: 0; box-sizing: border-box; }
  th { font-weight: 400; }
  .letters th { height: 17px; font: 13px/15px "Liberation Sans", sans-serif; color: #223; border-right: 1px solid #b4b4b4; border-bottom: 1px solid #999; }
  .letters th:last-child { border-right: 0; }
  .letters .cur { background: #d2d2d2; color: #217346; border-bottom: 2px solid #217346; }
  .corner svg { margin: 4px 3px 0 auto; }
  .heads th, td { height: 21px; border-right: 1px solid #000; border-bottom: 1px solid #000; overflow: hidden; }
  .heads th { font-weight: 600; border-bottom-color: #999; }
  .heads .rh, tbody .rh { font: 13px/18px "Liberation Sans", sans-serif; background: #e6e6e6; border-right: 1px solid #999; border-bottom: 1px solid #c8c8c8; padding: 2px 0 0; color: #223; vertical-align: bottom; }
  td { background: #fff; vertical-align: bottom; }
  .cell { width: 81px; height: 20px; display: flex; justify-content: center; align-items: center; white-space: nowrap; }
  .cell span { flex: none; padding-top: 2px; }
  .left .cell { justify-content: flex-start; padding-left: 2px; }
  .phone .cell { justify-content: flex-start; margin-left: -2px; }
  .lime { background: #0f0; } .cyan { background: #0ff; } .yellow { background: #ff0; } .orange { background: #e69138; }
  .heads .yellow { border: 1px solid #000; border-right-width: 2px; border-bottom-width: 2px; border-top: 0; }
  .heads .yellow .cell { width: 79px; height: 19px; }
  .heads .spill { overflow: visible; clip-path: inset(0 -80px 0 0); border-right-color: #0f0; }
  .heads .edge, td.edge { border-right: 0; } .heads .edge { background: #fff; }
  .red td { background: #f00; } .green td { background: #6aa84f; }
  .cm, .red td.cm { background: #fff; border-left: 1px solid #000; border-right-width: 2px; border-bottom-width: 2px; }
  .green td.cm { background: #6aa84f; }
  .cm .cell { justify-content: flex-start; padding-left: 1px; height: 19px; width: 78px; }
  td.wide { border-right-width: 1px; border-bottom-width: 1px; }
  td.first { border-top: 1px solid #000; } td.first .cell { height: 18px; }
  .join { display: flex; } .wide .cell { width: 82px; height: 20px; box-sizing: border-box; padding-left: 0; } .wide .cell:first-child { padding-left: 1px; } .wide .cell.mid { justify-content: center; }
  .green td.cm .cell { height: 176px; white-space: normal; align-items: flex-end; overflow: hidden; } .green .cm span { flex: 1 1 0; padding: 0; }

  .vscroll { width: 21px; flex: none; box-sizing: border-box; padding: 2px 2px 0 3px; display: flex; flex-direction: column; }
  .vscroll button, .hscroll button { width: 15px; height: 15px; box-sizing: border-box; border: 1px solid #ababab; background: #fff; flex: none; }
  .track { flex: 1; width: 15px; background: #dadada; }
  .thumb { display: block; box-sizing: border-box; height: 18px; margin-top: 175px; background: #fff; border: 1px solid #ababab; }
  .tabsbar { height: 28px; box-sizing: border-box; flex: none; display: flex; align-items: center; border-bottom: 1px solid #c6c6c6; padding-right: 24px; }
  .nv { width: 28px; } .nv:first-child { margin-left: 15px; }
  .st { align-self: flex-start; width: 65px; height: 25px; box-sizing: border-box; margin: 0 32px 0 29px; background: #fff; border: 1px solid #ababab; border-top: 0; border-bottom: 2px solid #217346; color: #217346; font-weight: 700; font-size: 12px; }
  .push { margin-left: auto; }
  .hscroll { display: flex; width: 506px; height: 15px; background: #dadada; }
  .hthumb { width: 131px; box-sizing: border-box; background: #fff; border: 1px solid #ababab; } .htrack { flex: 1; }
  .status { height: 21px; flex: none; display: flex; align-items: center; background: #f1f1f1; }
  .ready { margin: 0 auto 0 7px; }
  .vw { width: 38px; height: 21px; } .vw.on { background: #c9c9c9; }
  .zoom { display: flex; align-items: center; gap: 4px; margin-left: 4px; }
  .zoom input { appearance: none; width: 100px; height: 12px; margin: 0; background: linear-gradient(#aaa, #aaa) center / 100% 1px no-repeat; }
  .zoom input::-webkit-slider-thumb { appearance: none; width: 4px; height: 11px; background: #666; }
  .pct { margin: 0 9px 0 14px; }

  .taskbar { height: 40px; flex: none; display: flex; background: #3d3a2a; color: #fff; }
  .start { width: 48px; }
  .search { width: 288px; box-sizing: border-box; display: flex; align-items: center; background: #f2f2f2; border: 1px solid #ccc; padding: 0 3px 0 11px; color: #333; }
  .search input { flex: 1; font-size: 14px; margin-left: 10px; } .search input::placeholder { color: #333; opacity: 1; }
  .task { width: 48px; margin-right: 1px; position: relative; }
  .task.run::after, .excel::after, .opera::after { content: ''; position: absolute; bottom: 0; left: 4px; right: 4px; height: 2px; background: #76b9ed; }
  .opera { background: #b56a28; margin-left: 2px; } .opera::after { left: 0; right: 0; background: #f97316; }
  .excel { background: #62625a; } .excel::after { left: 0; right: 0; }
  .tray { margin-left: auto; display: flex; align-items: center; }
  .weather { font-size: 13px; gap: 8px; margin-right: 20px; }
  .ti { width: 24px; height: 40px; }
  .clock { display: flex; flex-direction: column; text-align: center; line-height: 18px; width: 64px; }
  .note { width: 48px; } .desk { width: 1px; height: 40px; background: #777; margin-right: 4px; }
</style>
